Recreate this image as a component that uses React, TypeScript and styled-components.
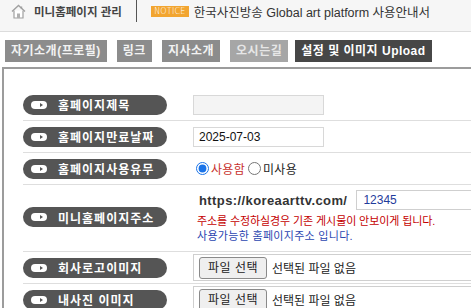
import React from "react";
import styled, { createGlobalStyle } from "styled-components";

const FONT = `"Liberation Sans", "Noto Sans CJK KR", sans-serif`;

const GlobalStyle = createGlobalStyle`
  html, body {
    margin: 0;
    padding: 0;
    background: #fff;
    overflow: hidden;
  }
  body {
    font-family: ${FONT};
    color: #333;
  }
`;

const TopBar = styled.div`
  height: 32px;
  box-sizing: border-box;
  background: #f6f6f6;
  border-bottom: 1px solid #dcdcdc;
  padding-left: 11px;
`;

const BarInner = styled.div`
  display: flex;
  align-items: center;
  height: 22px;
`;

const Title = styled.span`
  margin-left: 8px;
  font-size: 11.5px;
  font-weight: 700;
  color: #444;
  white-space: nowrap;
`;

const Divider = styled.span`
  align-self: stretch;
  width: 1px;
  background: #555;
  margin: 0 14px 0 14px;
`;

const Badge = styled.span`
  height: 11px;
  width: 38px;
  background: #f2a530;
  color: #fff;
  font-size: 8px;
  line-height: 11px;
  text-align: center;
  letter-spacing: 0.2px;
  font-family: "DejaVu Sans", sans-serif;
  font-weight: 300;
`;

const NoticeText = styled.span`
  margin-left: 5px;
  font-size: 12.5px;
  color: #333;
  white-space: nowrap;
`;

const Tabs = styled.div`
  display: flex;
  gap: 10px;
  padding: 8px 0 0 5px;
`;

const tabBg = { gray: "#8c8c8c", light: "#a6a6a6", dark: "#474747" };
const tabFg = { gray: "#f2f2f2", light: "#e6e6e6", dark: "#ffffff" };

const Tab = styled.div<{ $tone: "gray" | "light" | "dark" }>`
  height: 22px;
  line-height: 22px;
  padding: 0 6px;
  margin-left: ${(p) => (p.$tone === "dark" ? "-3px" : "0")};
  font-size: 12px;
  font-weight: 700;
  letter-spacing: 0.5px;
  white-space: nowrap;
  background: ${(p) => tabBg[p.$tone]};
  color: ${(p) => tabFg[p.$tone]};
`;

const Panel = styled.div`
  margin: 5px 0 0 2px;
  width: 640px;
  height: 400px;
  border: 2px solid #9c9c9c;
  padding: 20px 0 0 19px;
`;

const Row = styled.div<{ $tall?: boolean }>`
  display: grid;
  grid-template-columns: 144px 1fr;
  column-gap: 26px;
  align-items: center;
  min-height: 31px;
  padding: ${(p) => (p.$tall ? "5px 0 7px" : "0")};
  border-bottom: 1px solid #dedede;
`;

const Label = styled.div`
  height: 20px;
  border-radius: 10px;
  background: #555;
  color: #fff;
  display: flex;
  align-items: center;
  gap: 11px;
  padding-left: 8px;
  font-size: 12px;
  font-weight: 700;
  letter-spacing: 1px;
  white-space: nowrap;
`;

const Knob = styled.span`
  position: relative;
  flex: none;
  width: 16px;
  height: 8px;
  border-radius: 4px;
  background: #fff;
  &::after {
    content: "";
    position: absolute;
    right: 4px;
    top: 2px;
    border-left: 3px solid #555;
    border-top: 2px solid transparent;
    border-bottom: 2px solid transparent;
  }
`;

const Field = styled.div<{ $muted?: boolean }>`
  box-sizing: border-box;
  width: 131px;
  height: 20px;
  border: 1px solid #d8d8d8;
  background: ${(p) => (p.$muted ? "#f4f4f4" : "#fff")};
  padding-left: 5px;
  font-size: 12px;
  line-height: 18px;
  color: #111;
`;

const RadioGroup = styled.div`
  display: flex;
  align-items: center;
  font-size: 12px;
`;

const Radio = styled.input`
  width: 13px;
  height: 13px;
  margin: 0 2px 0 3px;
  accent-color: #1a73e8;
`;

const RadioText = styled.span<{ $active?: boolean }>`
  color: ${(p) => (p.$active ? "#c8302c" : "#222")};
  letter-spacing: 0.3px;
`;

const AddressBlock = styled.div`
  display: flex;
  flex-direction: column;
  padding-left: 4px;
`;

const UrlLine = styled.div`
  display: flex;
  align-items: center;
  gap: 9px;
  padding-left: 2px;
`;

const UrlText = styled.span`
  font-size: 13px;
  font-weight: 700;
  letter-spacing: 0.4px;
  color: #333;
  white-space: nowrap;
`;

const UrlInput = styled.div`
  flex: 1;
  box-sizing: border-box;
  height: 20px;
  border: 1px solid #cfcfcf;
  padding-left: 6px;
  font-size: 12px;
  line-height: 18px;
  color: #1f3c9c;
`;

const Note = styled.div<{ $tone: "warn" | "ok" }>`
  font-size: 11px;
  line-height: 15px;
  white-space: nowrap;
  color: ${(p) => (p.$tone === "warn" ? "#c40000" : "#2b46b0")};
  letter-spacing: ${(p) => (p.$tone === "warn" ? "-0.1px" : "0.3px")};
  margin-top: ${(p) => (p.$tone === "warn" ? "4px" : "0")};
`;

const FileBox = styled.div`
  box-sizing: border-box;
  height: 27px;
  border: 1px solid #cfcfcf;
  display: flex;
  align-items: center;
  padding-left: 5px;
  gap: 5px;
  font-size: 12px;
  color: #222;
`;

const FileButton = styled.span`
  box-sizing: border-box;
  height: 22px;
  padding: 0 8px;
  line-height: 20px;
  border: 1px solid #8a8a8a;
  border-radius: 3px;
  background: #efefef;
  letter-spacing: 0.5px;
`;

const HomeIcon = () => (
  <svg width="15" height="15" viewBox="0 0 15 15">
    <path d="M1 7.5 L7.5 1.5 L14 7.5" fill="none" stroke="#a0a0a0" strokeWidth="1.4" />
    <path d="M10.5 2.5 V5" stroke="#a0a0a0" strokeWidth="1.4" />
    <path d="M3 6.5 V14 H12 V6.5" fill="#fff" stroke="#a0a0a0" strokeWidth="1.2" />
    <rect x="6" y="9.5" width="3" height="4.5" fill="#b0b0b0" />
  </svg>
);

const LabelPill = ({ children }: { children: React.ReactNode }) => (
  <Label>
    <Knob />
    {children}
  </Label>
);

const FilePicker = () => (
  <FileBox>
    <FileButton>파일 선택</FileButton>
    <span>선택된 파일 없음</span>
  </FileBox>
);

export default function App() {
  return (
    <>
      <GlobalStyle />
      <TopBar>
        <BarInner>
          <HomeIcon />
          <Title>미니홈페이지 관리</Title>
          <Divider />
          <Badge>NOTICE</Badge>
          <NoticeText>한국사진방송 Global art platform 사용안내서</NoticeText>
        </BarInner>
      </TopBar>
      <Tabs>
        <Tab $tone="gray">자기소개(프로필)</Tab>
        <Tab $tone="gray">링크</Tab>
        <Tab $tone="gray">지사소개</Tab>
        <Tab $tone="light">오시는길</Tab>
        <Tab $tone="dark">설정 및 이미지 Upload</Tab>
      </Tabs>
      <Panel>
        <Row>
          <LabelPill>홈페이지제목</LabelPill>
          <Field $muted />
        </Row>
        <Row>
          <LabelPill>홈페이지만료날짜</LabelPill>
          <Field>2025-07-03</Field>
        </Row>
        <Row>
          <LabelPill>홈페이지사용유무</LabelPill>
          <RadioGroup>
            <Radio type="radio" name="use" defaultChecked />
            <RadioText $active>사용함</RadioText>
            <Radio type="radio" name="use" />
            <RadioText>미사용</RadioText>
          </RadioGroup>
        </Row>
        <Row $tall>
          <LabelPill>미니홈페이지주소</LabelPill>
          <AddressBlock>
            <UrlLine>
              <UrlText>https://koreaarttv.com/</UrlText>
              <UrlInput>12345</UrlInput>
            </UrlLine>
            <Note $tone="warn">주소를 수정하실경우 기존 게시물이 안보이게 됩니다.</Note>
            <Note $tone="ok">사용가능한 홈페이지주소 입니다.</Note>
          </AddressBlock>
        </Row>
        <Row>
          <LabelPill>회사로고이미지</LabelPill>
          <FilePicker />
        </Row>
        <Row>
          <LabelPill>내사진 이미지</LabelPill>
          <FilePicker />
        </Row>
      </Panel>
    </>
  );
}
